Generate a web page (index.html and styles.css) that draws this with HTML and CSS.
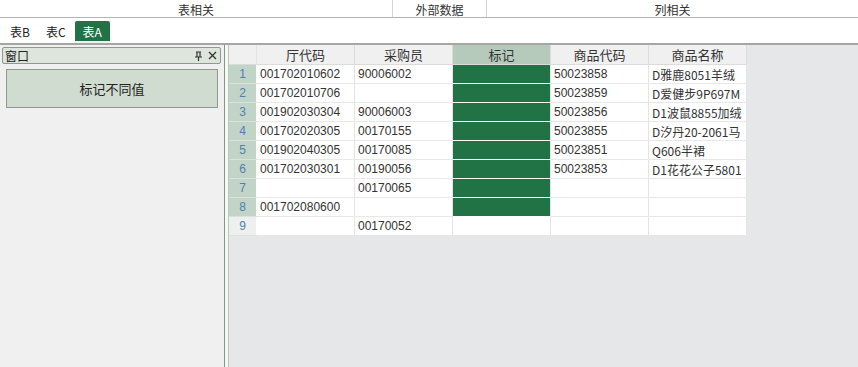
FILE: index.html
```html
<!DOCTYPE html>
<html lang="zh-CN">
<head>
    <meta charset="UTF-8">
    <title>表A</title>
    <link rel="stylesheet" href="styles.css">
</head>
<body>
    <div class="ribbon-groups">
        <div class="group group-table">表相关</div>
        <div class="group group-data">外部数据</div>
        <div class="group group-col">列相关</div>
    </div>

    <div class="tabs">
        <span class="tab">表B</span>
        <span class="tab">表C</span>
        <span class="tab active">表A</span>
    </div>

    <div class="main">
        <div class="side-panel">
            <div class="panel-head">
                <span class="panel-title">窗口</span>
                <span class="panel-tools">
                    <svg width="9" height="10" viewBox="0 0 9 10"><path d="M2 1h5M3 1v5M6 1v5M1 6h7M4.5 6v4" stroke="#333" stroke-width="1.2" fill="none"/></svg>
                    <svg width="9" height="9" viewBox="0 0 9 9"><path d="M1 1l7 7M8 1l-7 7" stroke="#333" stroke-width="1.3"/></svg>
                </span>
            </div>
            <button class="mark-btn">标记不同值</button>
        </div>
        <div class="splitter"></div>
        <div class="grid-area">
            <table class="grid">
                <thead>
                    <tr>
                        <th class="corner"></th>
                        <th>厅代码</th>
                        <th>采购员</th>
                        <th class="marked">标记</th>
                        <th>商品代码</th>
                        <th>商品名称</th>
                    </tr>
                </thead>
                <tbody>
                    <tr><td class="rn">1</td><td>001702010602</td><td>90006002</td><td class="mark"></td><td>50023858</td><td class="cn">D雅鹿8051羊绒</td></tr>
                    <tr><td class="rn">2</td><td>001702010706</td><td></td><td class="mark"></td><td>50023859</td><td class="cn">D爱健步9P697M</td></tr>
                    <tr><td class="rn">3</td><td>001902030304</td><td>90006003</td><td class="mark"></td><td>50023856</td><td class="cn">D1波鼠8855加绒</td></tr>
                    <tr><td class="rn">4</td><td>001702020305</td><td>00170155</td><td class="mark"></td><td>50023855</td><td class="cn">D汐丹20-2061马</td></tr>
                    <tr><td class="rn">5</td><td>001902040305</td><td>00170085</td><td class="mark"></td><td>50023851</td><td class="cn">Q606半裙</td></tr>
                    <tr><td class="rn">6</td><td>001702030301</td><td>00190056</td><td class="mark"></td><td>50023853</td><td class="cn">D1花花公子5801</td></tr>
                    <tr><td class="rn">7</td><td></td><td>00170065</td><td class="mark"></td><td></td><td></td></tr>
                    <tr><td class="rn">8</td><td>001702080600</td><td></td><td class="mark"></td><td></td><td></td></tr>
                    <tr class="last"><td class="rn">9</td><td></td><td>00170052</td><td></td><td></td><td></td></tr>
                </tbody>
            </table>
        </div>
    </div>
</body>
</html>
```

FILE: styles.css
```css
body {
    margin: 0;
    width: 858px;
    height: 367px;
    overflow: hidden;
    background-color: #fff;
    font-family: "Liberation Sans", "Noto Sans CJK SC", sans-serif;
    font-size: 12px;
    color: #222;
    display: flex;
    flex-direction: column;
}

.ribbon-groups {
    display: flex;
    height: 17px;
    border-bottom: 1px solid #b4b4b4;
}

.group {
    text-align: center;
    line-height: 19px;
    font-size: 12px;
    color: #333;
    font-family: "Noto Sans CJK SC", sans-serif;
}

.group-table {
    width: 392px;
    border-right: 1px solid #d6d6d6;
}

.group-data {
    width: 93px;
    border-right: 1px solid #d6d6d6;
}

.group-col {
    flex: 1;
}

.tabs {
    display: flex;
    align-items: flex-end;
    height: 25px;
    padding-left: 3px;
    border-bottom: 2px solid #a6a6a6;
}

.tab {
    height: 22px;
    line-height: 21px;
    padding: 0 7px;
    margin-right: 2px;
    font-family: "Noto Sans CJK SC", sans-serif;
    color: #222;
}

.tab.active {
    background-color: #217346;
    color: #fff;
    padding: 0 8px;
    border-radius: 2px 2px 0 0;
    border-bottom: 2px solid #f2f2f2;
    height: 20px;
}

.main {
    flex: 1;
    display: flex;
}

.side-panel {
    width: 224px;
    background-color: #f0f0f0;
    padding-top: 2px;
}

.panel-head {
    display: flex;
    justify-content: space-between;
    align-items: center;
    height: 15px;
    margin: 0 3px 0 2px;
    padding: 0 3px 0 2px;
    background-color: #dde5dc;
    border: 1px solid #8d9b8c;
    border-radius: 2px;
    font-family: "Noto Sans CJK SC", sans-serif;
}

.panel-tools {
    display: flex;
    gap: 5px;
    align-items: center;
}

.mark-btn {
    display: block;
    width: 212px;
    height: 39px;
    margin: 5px 0 0 6px;
    background-color: #cfdccf;
    border: 1px solid #8d9b8c;
    font-family: "Noto Sans CJK SC", sans-serif;
    font-size: 13px;
    color: #222;
}

.splitter {
    width: 3px;
    background-color: #f7f7f7;
    border-left: 1px solid #7f9a84;
    border-right: 1px solid #b8c8bb;
}

.grid-area {
    flex: 1;
    background-color: #e6e7e8;
}

.grid {
    border-collapse: collapse;
    table-layout: fixed;
}

.grid th {
    width: 97px;
    height: 19px;
    padding: 0;
    background-color: #f0f0f0;
    border-right: 1px solid #dcdcdc;
    border-bottom: 1px solid #dcdcdc;
    font-family: "Noto Sans CJK SC", sans-serif;
    font-weight: normal;
    font-size: 13px;
    color: #333;
}

.grid th.corner {
    width: 27px;
    border-right: 1px solid #e4e4e4;
}

.grid th.marked {
    background-color: #b6cabc;
}

.grid td {
    height: 18px;
    padding: 0 0 0 3px;
    background-color: #fff;
    border-right: 1px solid #e4e4e4;
    border-bottom: 1px solid #e8e8e8;
    white-space: nowrap;
    overflow: hidden;
    color: #333;
}

.grid td.cn {
    font-family: "Noto Sans CJK SC", sans-serif;
}

.grid td.rn {
    padding: 0;
    text-align: center;
    color: #4f7fb3;
    background-color: #c2d4c7;
    border-right: 1px solid #fff;
    border-bottom: 1px solid #d8e3db;
}

.grid tr.last td.rn {
    background-color: #eef0ef;
}

.grid td.mark {
    background-color: #217346;
    border-bottom: 1px solid #fff;
}
```
